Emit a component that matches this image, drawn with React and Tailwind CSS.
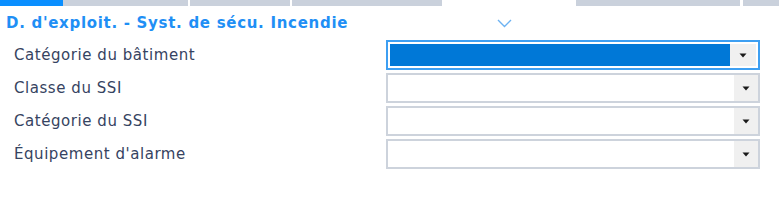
import React from "react";

function Caret() {
  return (
    <svg width="8" height="5" viewBox="0 0 8 5">
      <path d="M0.5 0.5 L7.5 0.5 L4 4.5 Z" fill="#1a1a1a" />
    </svg>
  );
}

function Select({ focused }) {
  if (focused) {
    return (
      <div className="flex h-[30px] w-[374px] border-2 border-[#3d9ff2] bg-white p-[2px]">
        <div className="flex-1 bg-[#0078d7]" />
        <div className="flex w-[26px] items-center justify-center bg-[#f0f0f0]">
          <Caret />
        </div>
      </div>
    );
  }
  return (
    <div className="flex h-[30px] w-[374px] border-2 border-[#cdd3dc] bg-white">
      <div className="flex-1" />
      <div className="flex w-[24px] items-center justify-center bg-[#f0f0f0]">
        <Caret />
      </div>
    </div>
  );
}

const rows = [
  ["Catégorie du bâtiment", true],
  ["Classe du SSI", false],
  ["Catégorie du SSI", false],
  ["Équipement d'alarme", false],
];

export default function App() {
  return (
    <div
      className="h-[221px] w-[779px] overflow-hidden bg-white"
      style={{ fontFamily: '"DejaVu Sans", Verdana, sans-serif' }}
    >
      <div className="flex h-[6px]">
        <div className="w-[63px] bg-[#0a8fff]" />
        <div className="w-[125px] bg-[#cad1dc]" />
        <div className="w-[2px]" />
        <div className="w-[100px] bg-[#cad1dc]" />
        <div className="w-[2px]" />
        <div className="w-[150px] bg-[#cad1dc]" />
        <div className="w-[134px]" />
        <div className="w-[164px] bg-[#cad1dc]" />
        <div className="w-[3px]" />
        <div className="flex-1 bg-[#cad1dc]" />
      </div>
      <div className="flex h-[34px] items-center">
        <div className="w-[497px] pl-[6px] text-[15px] font-bold tracking-[0.7px] text-[#1f8ff5]">
          D. d'exploit. - Syst. de sécu. Incendie
        </div>
        <svg width="15" height="9" viewBox="0 0 15 9">
          <path d="M1 1 L7.5 7.5 L14 1" fill="none" stroke="#6cb2f2" strokeWidth="1.4" />
        </svg>
      </div>
      <div className="grid grid-cols-[386px_374px] gap-y-[3px]">
        {rows.map(([label, focused]) => (
          <React.Fragment key={label}>
            <div className="flex h-[30px] items-center pl-[14px] text-[15px] tracking-[0.55px] text-[#364361]">
              {label}
            </div>
            <Select focused={focused} />
          </React.Fragment>
        ))}
      </div>
    </div>
  );
}
